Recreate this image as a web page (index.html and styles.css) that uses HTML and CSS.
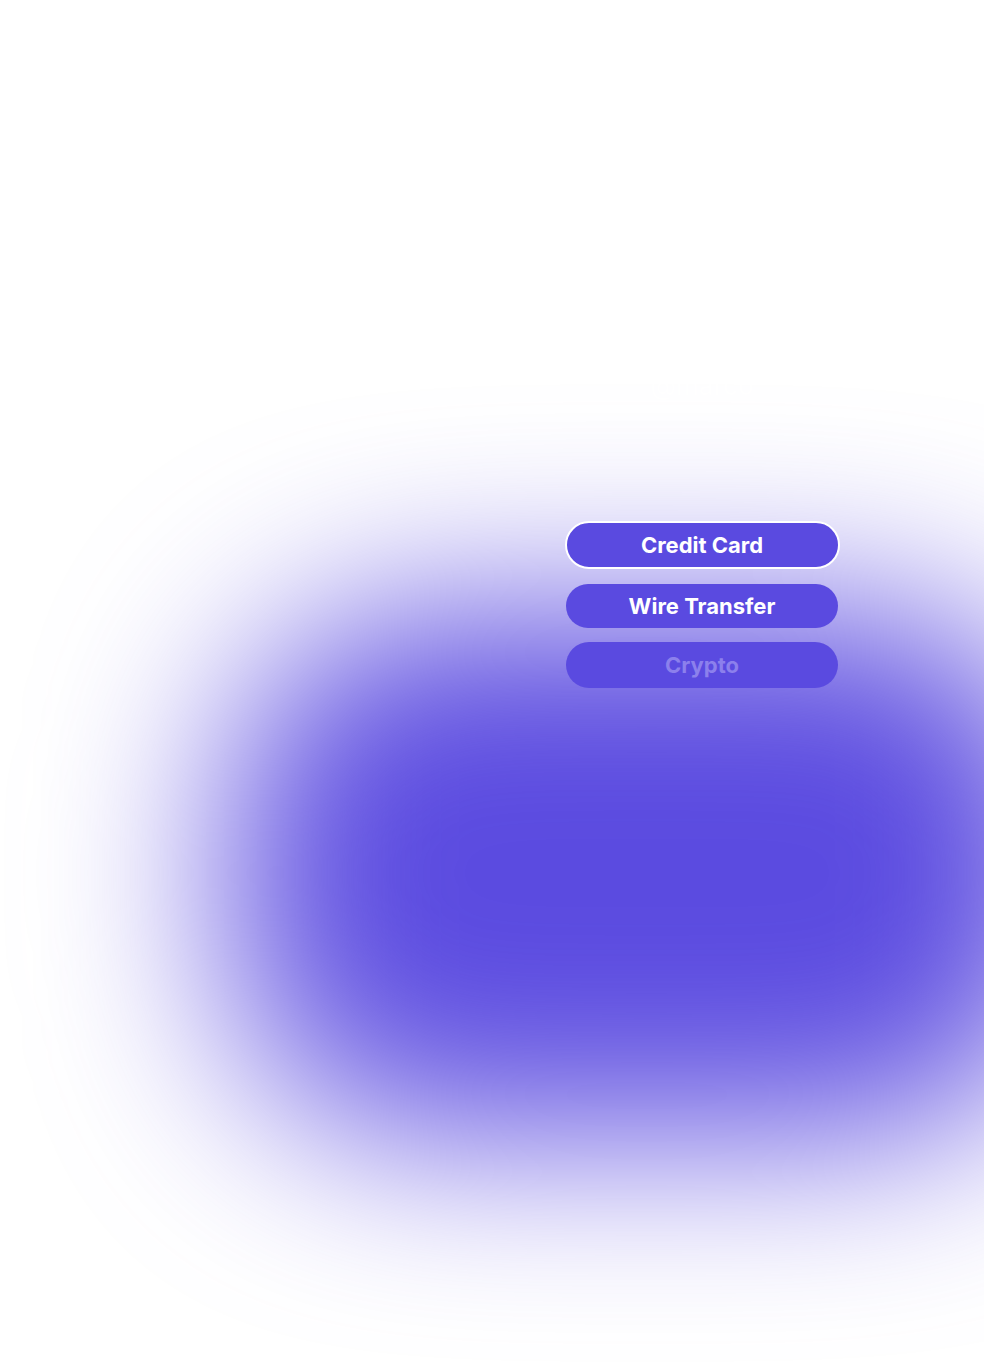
FILE: index.html
```html
<!DOCTYPE html>
<html lang="en">
<head>
<meta charset="utf-8">
<title>Payment methods</title>
<link rel="stylesheet" href="styles.css">
</head>
<body>
<div class="page">
  <div class="glow" aria-hidden="true"></div>
  <main class="content">
    <section class="panel">
      <div class="handle">@marco</div>
      <div class="methods">
        <button class="method method--selected">Credit Card</button>
        <button class="method">Wire Transfer</button>
        <button class="method method--disabled" disabled>Crypto</button>
      </div>
    </section>
  </main>
</div>
</body>
</html>
```

FILE: styles.css
```css
html, body {
  margin: 0;
  padding: 0;
  background: #ffffff;
  overflow: hidden;
}

.page {
  position: relative;
  width: 984px;
  height: 1364px;
  overflow: hidden;
  background: #ffffff;
  font-family: "Inter", "Liberation Sans", sans-serif;
}

.glow {
  position: absolute;
  left: 232px;
  top: 612px;
  width: 830px;
  height: 522px;
  border-radius: 200px;
  background: #5b4be0;
  filter: blur(95px);
  z-index: 0;
}

.content {
  position: relative;
  z-index: 1;
  display: flex;
  padding-top: 370px;
  padding-left: 552px;
}

.panel {
  width: 300px;
  display: flex;
  flex-direction: column;
  align-items: center;
}

.handle {
  color: #ffffff;
  font-size: 26px;
  font-weight: 500;
  line-height: 32px;
}

.methods {
  margin-top: 119px;
  display: flex;
  flex-direction: column;
  align-items: center;
}

.method {
  box-sizing: border-box;
  width: 272px;
  height: 44px;
  margin: 0;
  padding: 0;
  border: none;
  border-radius: 24px;
  background: #5a4ae0;
  color: #ffffff;
  font-family: "Inter", "Liberation Sans", sans-serif;
  font-size: 22px;
  font-weight: 700;
  line-height: 44px;
  text-align: center;
  cursor: pointer;
}

.method + .method {
  margin-top: 15px;
}

.method--selected {
  width: 275px;
  height: 48px;
  border: 2px solid #ffffff;
  line-height: 44px;
}

.method--disabled {
  height: 46px;
  margin-top: 14px !important;
  color: #8c80ec;
  cursor: default;
}
```
